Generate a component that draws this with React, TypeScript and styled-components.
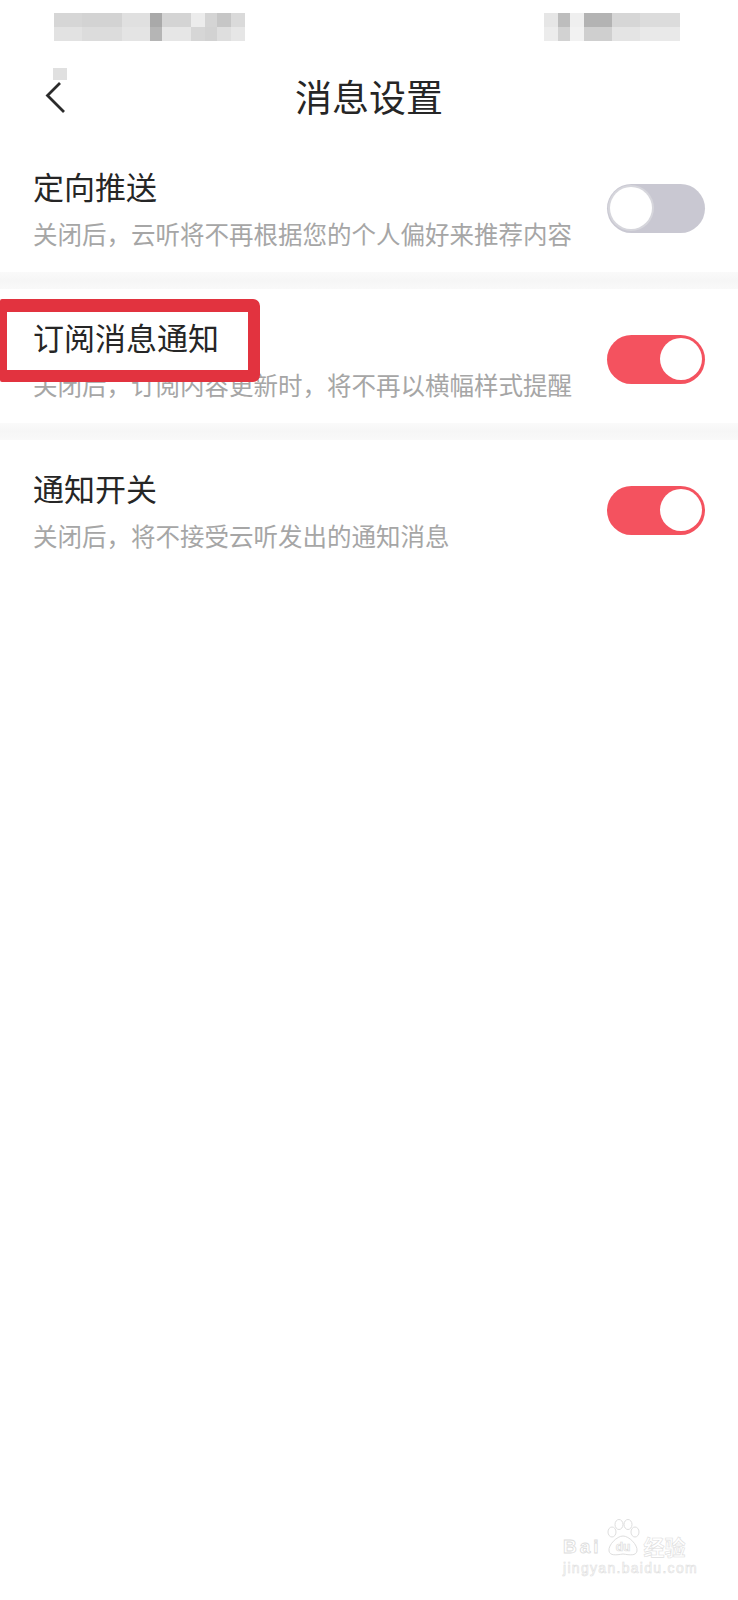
import styled, { createGlobalStyle } from "styled-components";

const GlobalStyle = createGlobalStyle`
  * {
    box-sizing: border-box;
  }

  body {
    margin: 0;
    background: #ffffff;
    font-family: "Noto Sans CJK SC", "Noto Sans", sans-serif;
  }
`;

interface MosaicColumn {
  width: number;
  top: string;
  bottom: string;
}

const leftBlob: MosaicColumn[] = [
  { width: 28, top: "#d6d6d6", bottom: "#e2e2e2" },
  { width: 40, top: "#d3d3d3", bottom: "#dcdcdc" },
  { width: 28, top: "#e0e0e0", bottom: "#e4e4e4" },
  { width: 12, top: "#a9a9a9", bottom: "#b5b5b5" },
  { width: 29, top: "#d4d4d4", bottom: "#e6e6e6" },
  { width: 14, top: "#ececec", bottom: "#d6d6d6" },
  { width: 12, top: "#d4d4d4", bottom: "#d2d2d2" },
  { width: 14, top: "#c6c6c6", bottom: "#dedede" },
  { width: 14, top: "#dadada", bottom: "#e6e6e6" },
];

const rightBlob: MosaicColumn[] = [
  { width: 14, top: "#e6e6e6", bottom: "#ececec" },
  { width: 12, top: "#bdbdbd", bottom: "#d2d2d2" },
  { width: 14, top: "#efefef", bottom: "#f2f2f2" },
  { width: 28, top: "#b3b3b3", bottom: "#cfcfcf" },
  { width: 28, top: "#d6d6d6", bottom: "#e4e4e4" },
  { width: 40, top: "#dcdcdc", bottom: "#e9e9e9" },
];

interface Setting {
  title: string;
  desc: string;
  on: boolean;
  highlight?: boolean;
}

const settings: Setting[] = [
  { title: "定向推送", desc: "关闭后，云听将不再根据您的个人偏好来推荐内容", on: false },
  { title: "订阅消息通知", desc: "关闭后，订阅内容更新时，将不再以横幅样式提醒", on: true, highlight: true },
  { title: "通知开关", desc: "关闭后，将不接受云听发出的通知消息", on: true },
];

function Mosaic(props: { columns: MosaicColumn[] }) {
  return <MosaicRow>
    {props.columns.map((c, i) => (
      <MosaicCol key={i} $w={c.width}>
        <MosaicCell $bg={c.top}/>
        <MosaicCell $bg={c.bottom}/>
      </MosaicCol>
    ))}
  </MosaicRow>
}

export default function App() {
  return <Page>
    <GlobalStyle/>
    <StatusBar>
      <Mosaic columns={leftBlob}/>
      <Mosaic columns={rightBlob}/>
    </StatusBar>

    <NavBar>
      <BackButton>
        <BlurSquare/>
        <svg width="22" height="34" viewBox="0 0 22 34">
          <path d="M15 3 L2.5 15.5 L19 32" fill="none" stroke="#2b2b2b" strokeWidth="2.8"/>
        </svg>
      </BackButton>
      <NavTitle>消息设置</NavTitle>
      <span/>
    </NavBar>

    {settings.map((s, i) => (
      <Section key={s.title}>
        {i > 0 && <Divider/>}
        <SettingRow>
          <RowText>
            <RowTitle>{s.title}</RowTitle>
            <RowDesc>{s.desc}</RowDesc>
          </RowText>
          <Toggle $on={s.on}/>
          {s.highlight && <Highlight/>}
        </SettingRow>
      </Section>
    ))}

    <Watermark>
      <BrandLine>
        <BrandText>Bai</BrandText>
        <svg width="38" height="38" viewBox="0 0 38 38">
          <g fill="#ffffff" stroke="#dedede" strokeWidth="1">
            <ellipse cx="8" cy="13" rx="4" ry="5"/>
            <ellipse cx="15" cy="5.5" rx="4" ry="5"/>
            <ellipse cx="24" cy="5.5" rx="4" ry="5"/>
            <ellipse cx="31" cy="13" rx="4" ry="5"/>
            <path d="M19 17 C25 17 34 26 33 32 C32 37 26 36 19 35 C12 36 6 37 5 32 C4 26 13 17 19 17 Z"/>
          </g>
          <text x="19" y="32" textAnchor="middle" fontFamily="Liberation Sans, sans-serif" fontSize="12" fontWeight="700" fill="#ffffff" stroke="#dcdcdc" strokeWidth="0.7">du</text>
        </svg>
        <BrandCjk>经验</BrandCjk>
      </BrandLine>
      <BrandUrl>jingyan.baidu.com</BrandUrl>
    </Watermark>
  </Page>
}

const Page = styled.div`
  position: relative;
  width: 738px;
  min-height: 1600px;
  background: #ffffff;
  overflow: hidden;
`;

const StatusBar = styled.div`
  display: flex;
  justify-content: space-between;
  align-items: flex-start;
  height: 62px;
  padding: 13px 58px 0 54px;
`;

const MosaicRow = styled.div`
  display: flex;
`;

const MosaicCol = styled.div<{ $w: number }>`
  display: flex;
  flex-direction: column;
  width: ${p => p.$w}px;
`;

const MosaicCell = styled.span<{ $bg: string }>`
  display: block;
  height: 14px;
  background: ${p => p.$bg};
`;

const NavBar = styled.div`
  display: grid;
  grid-template-columns: 1fr auto 1fr;
  align-items: start;
  height: 76px;
`;

const BackButton = styled.div`
  display: flex;
  flex-direction: column;
  padding-left: 45px;
`;

const BlurSquare = styled.span`
  display: block;
  width: 14px;
  height: 12px;
  margin: 6px 0 0 8px;
  background: #e0e0e0;
`;

const NavTitle = styled.h1`
  margin: 16px 0 0;
  font-size: 37px;
  line-height: 37px;
  font-weight: 400;
  color: #262626;
`;

const Section = styled.section`
  display: flex;
  flex-direction: column;
`;

const Divider = styled.div`
  height: 17px;
  background: linear-gradient(#fafafa, #f6f6f6 50%, #f9f9f9);
`;

const SettingRow = styled.div`
  position: relative;
  display: flex;
  justify-content: space-between;
  align-items: center;
  padding: 32px 33px 26px 33px;
`;

const RowText = styled.div`
  display: flex;
  flex-direction: column;
`;

const RowTitle = styled.div`
  font-size: 31px;
  line-height: 31px;
  color: #262626;
`;

const RowDesc = styled.div`
  margin-top: 20px;
  font-size: 24.5px;
  line-height: 25px;
  color: #a6a6a6;
  white-space: nowrap;
`;

const Toggle = styled.span<{ $on: boolean }>`
  position: relative;
  flex-shrink: 0;
  width: 98px;
  height: 49px;
  border-radius: 25px;
  background: ${p => p.$on ? "#f4525f" : "#c9c8d2"};

  &::after {
    content: "";
    position: absolute;
    top: 3.5px;
    left: ${p => p.$on ? 53 : 3}px;
    width: 42px;
    height: 42px;
    border-radius: 50%;
    background: #ffffff;
    box-shadow: ${p => p.$on ? "none" : "0 0 0 2px #d6d6dc"};
  }
`;

const Highlight = styled.div`
  position: absolute;
  left: 0;
  top: 10px;
  width: 260px;
  height: 83px;
  border-style: solid;
  border-color: #e2333f;
  border-width: 13px 12px 12px 7px;
  border-radius: 2px 7px 7px 2px;
  pointer-events: none;
`;

const Watermark = styled.div`
  position: absolute;
  left: 563px;
  top: 1519px;
  display: flex;
  flex-direction: column;
  gap: 4px;
`;

const BrandLine = styled.div`
  display: flex;
  align-items: flex-end;
  gap: 2px;
`;

const BrandText = styled.span`
  font-family: "Liberation Sans", sans-serif;
  font-size: 19px;
  line-height: 20px;
  font-weight: 700;
  letter-spacing: 3px;
  color: #ffffff;
  -webkit-text-stroke: 0.8px #dcdcdc;
`;

const BrandCjk = styled.span`
  font-size: 21px;
  line-height: 22px;
  font-weight: 700;
  color: #ffffff;
  -webkit-text-stroke: 0.6px #dedede;
`;

const BrandUrl = styled.span`
  font-family: "Liberation Sans", sans-serif;
  font-size: 14px;
  line-height: 15px;
  letter-spacing: 1.3px;
  color: #ffffff;
  -webkit-text-stroke: 0.6px #e0e0e0;
`;
